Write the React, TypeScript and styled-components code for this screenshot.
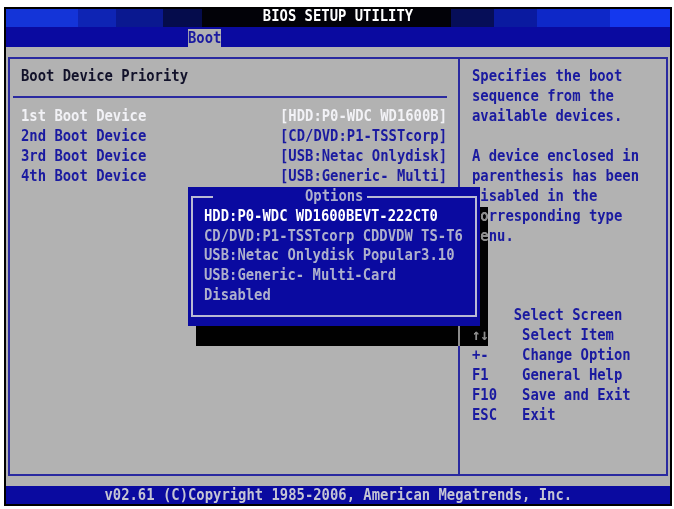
import React from "react";
import styled, { createGlobalStyle } from "styled-components";

// Text-mode cell metrics: the setup screen is an 80x25 character grid.
const CW = 8.35;
const RH = 19.96;

// The firmware font is a tall, narrow cell font; the mono face is drawn a
// little larger and squeezed horizontally to land on the cell width.
const FONT_PX = 15.5;
const SQUEEZE = CW / (0.602 * FONT_PX);

const BLUE = "#0a0aa0";
const GRAY = "#b2b2b2";
const INK = "#1a1aa0";
const LINE = "#2a2aa0";
const FRAME = "#b8bad4";

const GlobalStyle = createGlobalStyle`
  html, body { margin: 0; padding: 0; background: #ffffff; }
  body { font-family: "DejaVu Sans Mono", "Liberation Mono", monospace; }
`;

const Screen = styled.div`
  position: relative;
  box-sizing: border-box;
  width: 668px;
  height: 499px;
  margin: 7px 0 0 4px;
  border: 2px solid #000;
  background: #000;
  display: flex;
  flex-direction: column;
  font-family: "DejaVu Sans Mono", "Liberation Mono", monospace;
  font-weight: bold;
  font-size: ${FONT_PX}px;
  line-height: ${RH}px;
  white-space: pre;
`;

// A run of cell text, squeezed from its left edge.
const T = styled.span`
  display: inline-block;
  transform: scaleX(${SQUEEZE});
  transform-origin: 0 50%;
`;

// A run of cell text, squeezed about its centre.
const TC = styled(T)`
  transform-origin: 50% 50%;
`;

const TitleBar = styled.div`
  height: 18px;
  line-height: 14px;
  text-align: center;
  color: #ffffff;
  background: linear-gradient(
    to right,
    #1434d8 0px, #1434d8 72px,
    #0e24b4 72px, #0e24b4 110px,
    #0a1890 110px, #0a1890 157px,
    #050c4c 157px, #050c4c 196px,
    #020208 196px, #020208 445px,
    #060e58 445px, #060e58 488px,
    #0a1aa0 488px, #0a1aa0 531px,
    #0e28c8 531px, #0e28c8 604px,
    #1438ee 604px, #1438ee 664px
  );
`;

const MenuBar = styled.div`
  height: 20px;
  display: flex;
  background: ${BLUE};
`;

const MenuTab = styled.div<{ $active?: boolean }>`
  align-self: flex-end;
  margin-left: ${22 * CW + 4 - 6}px;
  width: ${4 * CW}px;
  height: 18px;
  line-height: 18px;
  color: ${(p) => (p.$active ? INK : "#c8c8d8")};
  background: ${(p) => (p.$active ? GRAY : "transparent")};
`;

const Main = styled.div`
  flex: 1;
  min-height: 0;
  box-sizing: border-box;
  padding: 10px 2px 10px 2px;
  background: ${GRAY};
`;

const Frame = styled.div`
  box-sizing: border-box;
  height: 100%;
  display: flex;
  border: 2px solid ${LINE};
`;

const LeftPane = styled.div`
  box-sizing: border-box;
  width: 450px;
  padding-top: 8px;
  border-right: 2px solid ${LINE};
`;

const RightPane = styled.div`
  flex: 1;
  padding: 8px 0 0 11.6px;
  color: ${INK};
`;

const SectionTitle = styled.div`
  height: ${RH}px;
  padding-left: 10.7px;
  color: #12122a;
`;

const Rule = styled.div`
  height: ${RH}px;
  display: flex;
  align-items: center;
  padding: 0 11px 0 3px;

  &::before {
    content: "";
    flex: 1;
    height: 2px;
    background: ${LINE};
  }
`;

const DeviceRow = styled.div<{ $active?: boolean }>`
  display: grid;
  grid-template-columns: ${31 * CW}px 1fr;
  height: ${RH}px;
  padding-left: 10.7px;
  color: ${(p) => (p.$active ? "#f2f2f6" : INK)};
`;

const HelpLine = styled.div`
  height: ${RH}px;
`;

const Legend = styled.div`
  margin-top: ${3 * RH}px;
`;

const Footer = styled.div`
  height: 18px;
  line-height: 18px;
  text-align: center;
  color: #c4c4d4;
  background: ${BLUE};
`;

// Pop-up list drawn over the page, with its text-mode drop shadow.
const POP_LEFT = 4 + 22 * CW - 6;
const POP_TOP = 7 + 9 * RH - 9;

const Shadow = styled.div`
  position: absolute;
  left: ${POP_LEFT + CW}px;
  top: ${POP_TOP + RH}px;
  width: ${35 * CW}px;
  height: ${7 * RH}px;
  backdrop-filter: grayscale(1) invert(1) contrast(2.5) brightness(0.55);
`;

const Popup = styled.div`
  position: absolute;
  left: ${POP_LEFT}px;
  top: ${POP_TOP}px;
  width: ${35 * CW}px;
  height: ${7 * RH}px;
  box-sizing: border-box;
  background: ${BLUE};
  color: #aeb0cc;
  display: flex;
  flex-direction: column;
`;

const Caption = styled.div`
  height: ${RH}px;
  display: flex;
  padding: 0 ${CW / 2 - 1}px;
`;

const CapLeft = styled.div`
  align-self: flex-end;
  box-sizing: border-box;
  width: ${3 * CW - (CW / 2 - 1)}px;
  height: ${RH / 2 + 1}px;
  border-top: 2px solid ${FRAME};
  border-left: 2px solid ${FRAME};
`;

const CapText = styled.div`
  margin: 0 4px 0 ${11 * CW}px;
  width: ${7 * CW}px;
`;

const CapRight = styled.div`
  flex: 1;
  align-self: flex-end;
  box-sizing: border-box;
  height: ${RH / 2 + 1}px;
  border-top: 2px solid ${FRAME};
  border-right: 2px solid ${FRAME};
`;

const OptionBox = styled.div`
  margin: 0 ${CW / 2 - 1}px;
  padding: 0 0 ${RH / 2 - 1}px ${2 * CW - (CW / 2 - 1) - 2}px;
  border: 2px solid ${FRAME};
  border-top: none;
`;

const OptionItem = styled.div<{ $selected?: boolean }>`
  height: ${RH}px;
  color: ${(p) => (p.$selected ? "#ffffff" : "#aeb0cc")};
`;

const devices = [
  { label: "1st Boot Device", value: "[HDD:P0-WDC WD1600B]" },
  { label: "2nd Boot Device", value: "[CD/DVD:P1-TSSTcorp]" },
  { label: "3rd Boot Device", value: "[USB:Netac Onlydisk]" },
  { label: "4th Boot Device", value: "[USB:Generic- Multi]" },
];

const help = [
  "Specifies the boot",
  "sequence from the",
  "available devices.",
  "",
  "A device enclosed in",
  "parenthesis has been",
  "disabled in the",
  "corresponding type",
  "menu.",
];

const keys = [
  "     Select Screen",
  "\u2191\u2193    Select Item",
  "+-    Change Option",
  "F1    General Help",
  "F10   Save and Exit",
  "ESC   Exit",
];

const options = [
  "HDD:P0-WDC WD1600BEVT-222CT0",
  "CD/DVD:P1-TSSTcorp CDDVDW TS-T6",
  "USB:Netac Onlydisk Popular3.10",
  "USB:Generic- Multi-Card",
  "Disabled",
];

export default function App() {
  return (
    <>
      <GlobalStyle />
      <Screen>
        <TitleBar>
          <TC>BIOS SETUP UTILITY</TC>
        </TitleBar>
        <MenuBar>
          <MenuTab $active>
            <T>Boot</T>
          </MenuTab>
        </MenuBar>
        <Main>
          <Frame>
            <LeftPane>
              <SectionTitle>
                <T>Boot Device Priority</T>
              </SectionTitle>
              <Rule />
              {devices.map((d, i) => (
                <DeviceRow key={d.label} $active={i === 0}>
                  <T>{d.label}</T>
                  <T>{d.value}</T>
                </DeviceRow>
              ))}
            </LeftPane>
            <RightPane>
              {help.map((line, i) => (
                <HelpLine key={i}>
                  <T>{line}</T>
                </HelpLine>
              ))}
              <Legend>
                {keys.map((line) => (
                  <HelpLine key={line}>
                    <T>{line}</T>
                  </HelpLine>
                ))}
              </Legend>
            </RightPane>
          </Frame>
        </Main>
        <Footer>
          <TC>v02.61 (C)Copyright 1985-2006, American Megatrends, Inc.</TC>
        </Footer>

        <Shadow />
        <Popup>
          <Caption>
            <CapLeft />
            <CapText>
              <T>Options</T>
            </CapText>
            <CapRight />
          </Caption>
          <OptionBox>
            {options.map((o, i) => (
              <OptionItem key={o} $selected={i === 0}>
                <T>{o}</T>
              </OptionItem>
            ))}
          </OptionBox>
        </Popup>
      </Screen>
    </>
  );
}
